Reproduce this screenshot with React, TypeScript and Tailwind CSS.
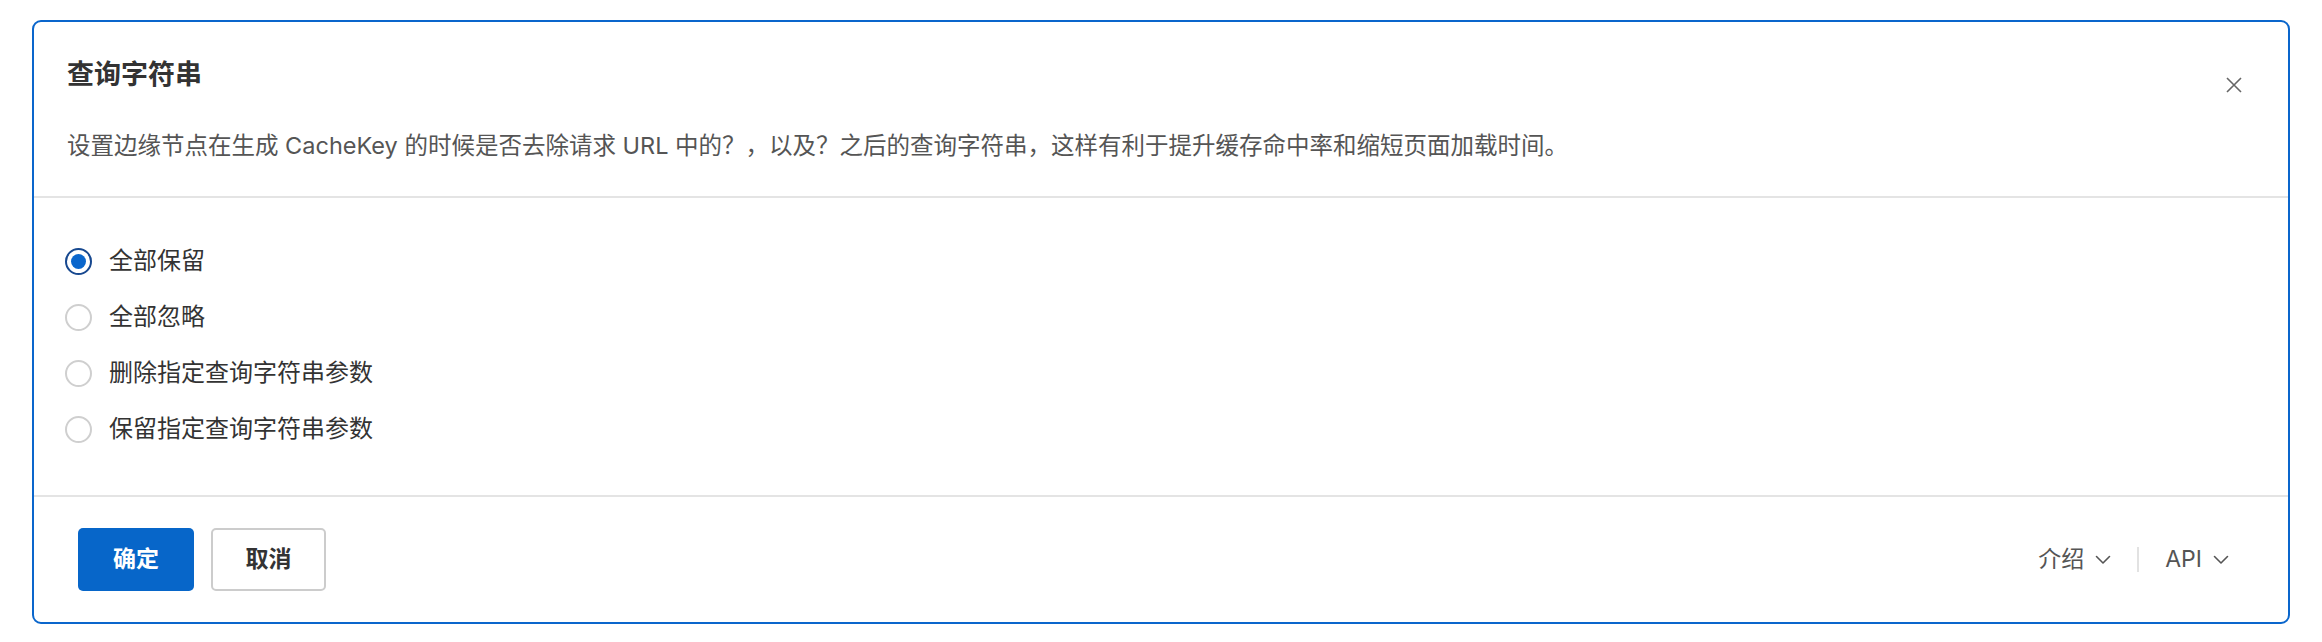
import React from "react";

const font = { fontFamily: 'Inter, "Noto Sans CJK SC", "Noto Sans", sans-serif' };

function Chevron() {
  return (
    <svg width="16" height="10" viewBox="0 0 16 10" fill="none" className="ml-[11px]">
      <path d="M1.5 1.5 L8 8 L14.5 1.5" stroke="#555" strokeWidth="1.6" strokeLinecap="round" strokeLinejoin="round" />
    </svg>
  );
}

function Radio({ checked, label }: { checked?: boolean; label: string }) {
  return (
    <label className="flex h-[56px] items-center cursor-pointer">
      {checked ? (
        <span className="flex h-[27px] w-[27px] items-center justify-center rounded-full border-2 border-[#17488f] bg-white">
          <span className="h-[15px] w-[15px] rounded-full bg-[#0a66cc]" />
        </span>
      ) : (
        <span className="h-[27px] w-[27px] rounded-full border-2 border-[#cfcfcf] bg-white" />
      )}
      <span className="ml-[17px] text-[24px] leading-[32px] text-[#333]">{label}</span>
    </label>
  );
}

export default function App() {
  return (
    <div className="min-h-[642px] w-[2322px] bg-white pt-[20px] pl-[32px]" style={font}>
      <div className="flex h-[604px] w-[2258px] flex-col rounded-[9px] border-2 border-[#0a66cc] bg-white">
        <div className="relative px-[33px] pt-[35px] pb-[34px]">
          <h1 className="text-[27px] font-bold leading-[36px] text-[#333]">查询字符串</h1>
          <p className="mt-[37px] text-[23.5px] leading-[32px] text-[#555]">
            设置边缘节点在生成 CacheKey 的时候是否去除请求 URL 中的？，以及？之后的查询字符串，这样有利于提升缓存命中率和缩短页面加载时间。
          </p>
          <button className="absolute right-[44px] top-[53px] flex h-[20px] w-[20px] items-center justify-center">
            <svg width="16" height="16" viewBox="0 0 16 16" fill="none">
              <path d="M1 1 L15 15 M15 1 L1 15" stroke="#666" strokeWidth="1.6" />
            </svg>
          </button>
        </div>
        <div className="h-[2px] bg-[#e4e4e4]" />
        <div className="flex flex-col pl-[31px] pt-[35px] pb-[38px]">
          <Radio checked label="全部保留" />
          <Radio label="全部忽略" />
          <Radio label="删除指定查询字符串参数" />
          <Radio label="保留指定查询字符串参数" />
        </div>
        <div className="h-[2px] bg-[#e4e4e4]" />
        <div className="flex flex-1 items-center justify-between pl-[44px] pr-[59px]">
          <div className="flex items-center gap-[17px]">
            <button className="h-[63px] w-[116px] rounded-[5px] bg-[#0766c9] text-[23px] font-bold text-white">确定</button>
            <button className="h-[63px] w-[115px] rounded-[5px] border-2 border-[#cccccc] bg-white text-[23px] font-bold text-[#333]">取消</button>
          </div>
          <div className="flex items-center text-[23px] text-[#555]">
            <span className="flex items-center">介绍<Chevron /></span>
            <span className="mx-[26px] h-[25px] w-[2px] bg-[#e2e2e2]" />
            <span className="flex items-center">API<Chevron /></span>
          </div>
        </div>
      </div>
    </div>
  );
}
